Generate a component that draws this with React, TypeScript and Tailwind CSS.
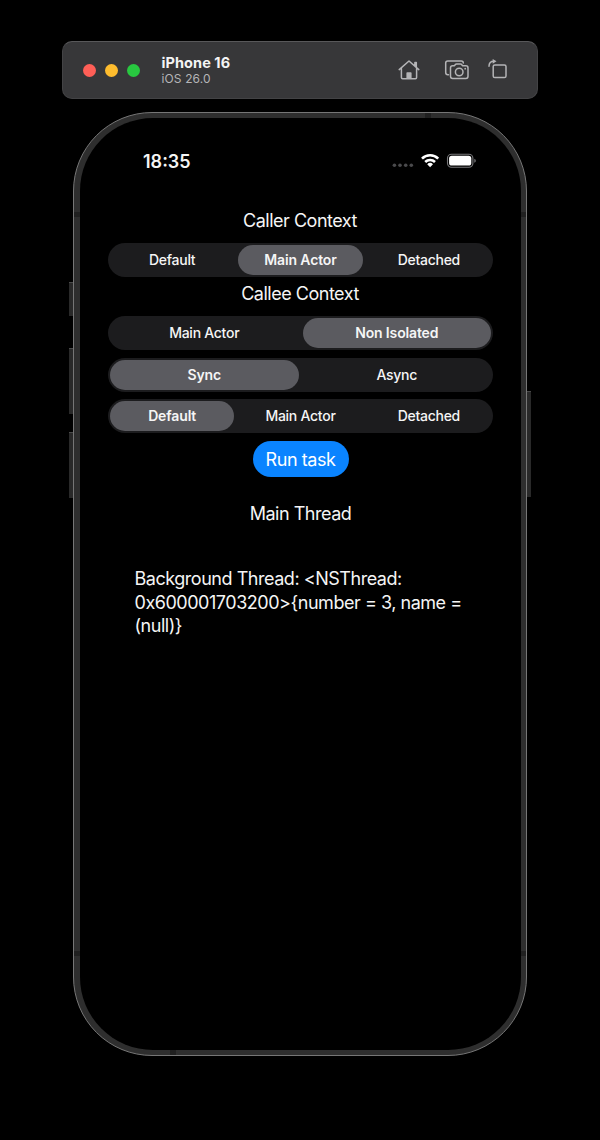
import React from "react";

type SegmentedProps = { options: string[]; selected: number; className?: string };

function Segmented({ options, selected, className = "" }: SegmentedProps) {
  return (
    <div role="tablist" className={`flex h-[34px] w-[385px] rounded-full bg-[#1c1c1e] text-[14px] leading-[30px] ${className}`}>
      {options.map((label, i) => (
        <button
          key={label}
          role="tab"
          aria-selected={i === selected}
          className={
            i === selected
              ? "m-[2px] min-w-0 flex-1 rounded-full bg-[#5b5b60] font-semibold tracking-[-0.01em]"
              : "m-[2px] min-w-0 flex-1 rounded-full font-medium tracking-[-0.019em]"
          }
        >
          {label}
        </button>
      ))}
    </div>
  );
}

function HomeIcon() {
  return (
    <svg width="22" height="22" viewBox="0 0 22 22" fill="none" stroke="#b4b4b6" strokeWidth="1.5" strokeLinecap="round" strokeLinejoin="round">
      <path d="M1.2 10.6 11 2l9.8 8.6M16.9 7V3.5h1.4v4.8M3.4 9v9.6q0 1.2 1.2 1.2h12.8q1.2 0 1.2-1.2V9" />
      <path d="M8.4 20v-6q0-.8.8-.8h3.6q.8 0 .8.8v6z" fill="#b4b4b6" stroke="none" />
    </svg>
  );
}

function CameraIcon() {
  return (
    <svg width="26" height="22" viewBox="0 0 26 22" fill="none" stroke="#b4b4b6" strokeWidth="1.5" strokeLinecap="round" strokeLinejoin="round">
      <path d="M4.5 15.7H3.8Q1.7 15.7 1.7 13.6V4Q1.7 1.9 3.8 1.9h13.4Q19.3 1.9 19.3 4" />
      <path d="M8.6 6.8h1.7l1.2-1.4q.4-.4 1-.4h4q.6 0 1 .4l1.2 1.4h3.2q2.1 0 2.1 2.1v8.4q0 2.1-2.1 2.1H8.6q-2.1 0-2.1-2.1V8.9q0-2.1 2.1-2.1z" />
      <circle cx="15.2" cy="13" r="3.8" />
      <circle cx="21.2" cy="9.7" r=".9" fill="#b4b4b6" stroke="none" />
    </svg>
  );
}

function RotateIcon() {
  return (
    <svg width="20" height="22" viewBox="0 0 20 22" fill="none" stroke="#b4b4b6" strokeWidth="1.5" strokeLinecap="round" strokeLinejoin="round">
      <rect x="5.2" y="6" width="12.8" height="12.6" rx="1.6" />
      <path d="M1 7.2C1 4 2.5 2.2 5.9 2.2" />
      <path d="M4.7 0 8.5 2.2 4.7 4.7z" fill="#b4b4b6" stroke="none" />
    </svg>
  );
}

function Toolbar() {
  return (
    <header className="flex h-[58px] w-[476px] items-center rounded-[10px] border border-[#434345] border-t-[#58585a] bg-[#373739] pl-[20px] pr-[29px]">
      <div className="flex gap-[9px]">
        <span className="size-[13px] rounded-full bg-[#ff5f57]" />
        <span className="size-[13px] rounded-full bg-[#febc2e]" />
        <span className="size-[13px] rounded-full bg-[#28c840]" />
      </div>
      <div className="ml-[21.5px] flex flex-col">
        <span className="text-[14.5px] font-bold leading-[17px] tracking-[0.005em] text-[#f4f4f4]">iPhone 16</span>
        <span className="text-[12px] leading-[15px] tracking-[0.01em] text-[#b5b5b7]">iOS 26.0</span>
      </div>
      <div className="ml-auto flex items-center">
        <HomeIcon />
        <span className="ml-[24px]"><CameraIcon /></span>
        <span className="ml-[18.5px]"><RotateIcon /></span>
      </div>
    </header>
  );
}

function StatusBar() {
  return (
    <div className="flex h-[22px] w-full items-center pl-[63px] pr-[45px]">
      <span className="pt-px text-[18px] font-semibold leading-[22px]">18:35</span>
      <div className="ml-auto flex items-center">
        <svg width="85" height="16" viewBox="0 0 85 16">
          <g fill="#4a4a4c">
            <circle cx="3.4" cy="12.2" r="1.8" />
            <circle cx="9" cy="12.2" r="1.8" />
            <circle cx="14.7" cy="12.2" r="1.8" />
            <circle cx="20.3" cy="12.2" r="1.8" />
          </g>
          <g fill="none" stroke="#fff" strokeWidth="2.6">
            <path d="M31 5.6a11.5 11.5 0 0 1 16.2 0" />
            <path d="M34.2 9a7 7 0 0 1 9.8 0" />
          </g>
          <path d="M39.1 14.2 36.2 11.3a4.1 4.1 0 0 1 5.8 0z" fill="#fff" />
          <rect x="56.5" y="1.2" width="25.4" height="13" rx="4" fill="none" stroke="#77777a" strokeWidth="1.1" />
          <rect x="58.1" y="2.8" width="22.2" height="9.8" rx="2.7" fill="#fff" />
          <path d="M83.3 5.7q1.5.6 1.5 2t-1.5 2z" fill="#77777a" />
        </svg>
      </div>
    </div>
  );
}

export default function App() {
  return (
    <div className="flex h-[1140px] w-[600px] flex-col items-center bg-black pt-[41px] font-['Inter','Liberation_Sans',sans-serif] text-[#f5f5f5]">
      <Toolbar />
      <main className="relative mt-[13px] h-[944px] w-[454px] rounded-[79px] border border-[#767676] bg-[#2e2e2e] py-[5px] pl-[6px] pr-[5px]">
        <span className="absolute -left-[5px] top-[169px] h-[34px] w-[4px] border-t border-[#4a4a4a] bg-[#292929]" />
        <span className="absolute -left-[5px] top-[235px] h-[66px] w-[4px] border-t border-[#4a4a4a] bg-[#292929]" />
        <span className="absolute -left-[5px] top-[319px] h-[66px] w-[4px] border-t border-[#4a4a4a] bg-[#292929]" />
        <span className="absolute -right-[5px] top-[278px] h-[106px] w-[4px] border-t border-[#4a4a4a] bg-[#292929]" />
        <span className="absolute left-0 top-[99px] h-[5px] w-[6px] bg-[#202020]" />
        <span className="absolute right-0 top-[99px] h-[5px] w-[5px] bg-[#202020]" />
        <span className="absolute left-0 top-[838px] h-[5px] w-[6px] bg-[#202020]" />
        <span className="absolute right-0 top-[838px] h-[5px] w-[5px] bg-[#202020]" />
        <span className="absolute left-[351px] top-0 h-[5px] w-[6px] bg-[#202020]" />
        <span className="absolute bottom-0 left-[96px] h-[5px] w-[6px] bg-[#202020]" />
        <div className="flex h-full flex-col items-center rounded-[73px] bg-black pt-[32px]">
          <StatusBar />
          <h2 className="mr-[1px] mt-[37px] h-[24px] text-[18px] leading-[24px] tracking-[-0.027em]">Caller Context</h2>
          <Segmented className="mt-[10px]" options={["Default", "Main Actor", "Detached"]} selected={1} />
          <h2 className="mr-[1px] mt-[5px] h-[24px] text-[18px] leading-[24px] tracking-[-0.027em]">Callee Context</h2>
          <Segmented className="mt-[10px]" options={["Main Actor", "Non Isolated"]} selected={1} />
          <Segmented className="mt-[8px]" options={["Sync", "Async"]} selected={0} />
          <Segmented className="mt-[7px]" options={["Default", "Main Actor", "Detached"]} selected={0} />
          <button className="mt-[8px] h-[36px] w-[96px] rounded-full bg-[#0a84ff] text-[18px] leading-[37px] tracking-[-0.025em] text-white">Run task</button>
          <p className="mt-[25px] h-[24px] text-[18px] leading-[24px] tracking-[-0.027em]">Main Thread</p>
          <p className="mt-[41px] w-[332px] whitespace-nowrap text-[18px] leading-[23.5px] tracking-[-0.026em]">
            Background Thread: &lt;NSThread:<br />
            0x600001703200&gt;{"{"}number = 3, name =<br />
            (null){"}"}
          </p>
        </div>
      </main>
    </div>
  );
}
